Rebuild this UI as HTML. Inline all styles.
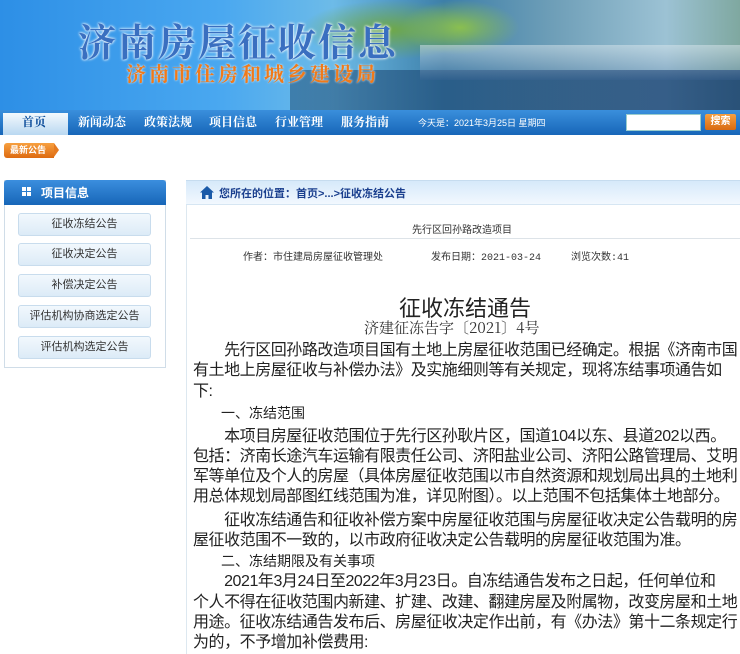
<!DOCTYPE html>
<html><head><meta charset="utf-8"><style>
*{margin:0;padding:0;box-sizing:border-box}
body{width:740px;height:654px;overflow:hidden;background:#fff;font-family:"Liberation Sans","Noto Sans CJK SC",sans-serif;position:relative}
.a{position:absolute;white-space:nowrap}
#ban{left:0;top:0;width:740px;height:110px;background:linear-gradient(90deg,#2d8fe6 0%,#4aa8f0 30%,#6dbbe8 45%,#3d7fa8 60%,#6f9fb8 75%,#9cc2d4 90%,#7fa8a0 100%);overflow:hidden}
#nav{left:0;top:110px;width:740px;height:25px;background:linear-gradient(#3a8fdc,#1766b8)}
.n{position:absolute;top:113px;font-size:12px;font-weight:bold;color:#fff;font-family:"Noto Serif CJK SC",serif}
.lb{position:absolute;left:18px;width:133px;height:23px;border:1px solid #c8dced;border-radius:3px;background:linear-gradient(#f2f8fd,#dcebf7);font-size:11px;color:#333;text-align:center;line-height:21px}
.t{position:absolute;left:193px;font-size:16px;letter-spacing:-0.45px;color:#222;white-space:nowrap;line-height:20px}
</style></head><body>
<div id="ban" class="a">
 <div class="a" style="left:300px;top:0;width:180px;height:60px;background:radial-gradient(ellipse at center,#6fa848 0%,rgba(80,140,60,0) 70%)"></div>
 <div class="a" style="left:400px;top:0;width:120px;height:55px;background:radial-gradient(ellipse at center,#8abf50 0%,rgba(80,140,60,0) 70%)"></div>
 <div class="a" style="left:290px;top:70px;width:450px;height:40px;background:linear-gradient(90deg,rgba(40,90,130,.6),rgba(20,60,110,.8))"></div>
 <div class="a" style="left:420px;top:45px;width:320px;height:35px;background:linear-gradient(rgba(220,232,238,.5),rgba(60,100,150,.3))"></div>
 <div class="a" style="left:78px;top:12px;font-size:38px;font-weight:bold;color:#3a6fc0;font-family:'Noto Serif CJK SC',serif;letter-spacing:2px;text-shadow:0 0 3px #fff,0 0 2px #fff">济南房屋征收信息</div>
 <div class="a" style="left:126px;top:58px;font-size:20px;font-weight:bold;color:#f07a1a;font-family:'Noto Serif CJK SC',serif;letter-spacing:3px;text-shadow:0 0 2px #fff">济南市住房和城乡建设局</div>
</div>
<div id="nav" class="a"></div>
<div class="a" style="left:3px;top:113px;width:65px;height:22px;background:linear-gradient(#f4f9fd,#b9d8f1)"></div>
<div class="n" style="left:22px;color:#0d4d9a">首页</div>
<div class="n" style="left:78px">新闻动态</div>
<div class="n" style="left:144px">政策法规</div>
<div class="n" style="left:209px">项目信息</div>
<div class="n" style="left:275px">行业管理</div>
<div class="n" style="left:341px">服务指南</div>
<div class="a" style="left:418px;top:116px;font-size:9px;color:#fff">今天是：2021年3月25日 星期四</div>
<div class="a" style="left:626px;top:114px;width:75px;height:17px;background:#fff;border:1px solid #9cc"></div>
<div class="a" style="left:705px;top:114px;width:31px;height:16px;background:linear-gradient(#f6a040,#d86a10);border-radius:2px;color:#fff;font-size:10px;font-weight:bold;text-align:center;line-height:16px">搜索</div>
<div class="a" style="left:4px;top:143px;width:50px;height:15px;background:linear-gradient(#f7a040,#dd6a10);border-radius:3px 0 0 3px;color:#fff;font-size:9px;font-weight:bold;line-height:15px;padding-left:6px">最新公告</div>
<div class="a" style="left:54px;top:143px;width:0;height:0;border-top:7.5px solid transparent;border-bottom:7.5px solid transparent;border-left:5px solid #e57a20"></div>
<div class="a" style="left:4px;top:180px;width:162px;height:188px;border:1px solid #d0dde8"></div>
<div class="a" style="left:4px;top:180px;width:162px;height:25px;background:linear-gradient(#3b8ede,#1766b8);border-radius:3px 3px 0 0"></div>
<div class="a" style="left:22px;top:187px;width:4px;height:4px;background:#fff;box-shadow:5px 0 #fff,0 5px #fff,5px 5px #fff"></div>
<div class="a" style="left:41px;top:184px;font-size:12px;font-weight:bold;color:#fff">项目信息</div>
<div class="lb" style="top:213px">征收冻结公告</div>
<div class="lb" style="top:243px">征收决定公告</div>
<div class="lb" style="top:274px">补偿决定公告</div>
<div class="lb" style="top:305px">评估机构协商选定公告</div>
<div class="lb" style="top:336px">评估机构选定公告</div>
<div class="a" style="left:186px;top:180px;width:554px;height:25px;background:linear-gradient(#d6e9fa,#f2f8fe);border-top:1px solid #c6dcef;border-bottom:1px solid #d6e6f3"></div>
<div class="a" style="left:186px;top:205px;width:1px;height:449px;background:#dde8f0"></div>
<svg class="a" style="left:200px;top:186px" width="14" height="13" viewBox="0 0 14 13"><path d="M7 0L0 6.5h2V13h3.5V9h3v4H12V6.5h2z" fill="#1a5aa8"/></svg>
<div class="a" style="left:219px;top:185px;font-size:11px;font-weight:bold;color:#1a3f8e">您所在的位置：首页&gt;...&gt;征收冻结公告</div>
<div class="a" style="left:412px;top:221px;font-size:10px;color:#333">先行区回孙路改造项目</div>
<div class="a" style="left:190px;top:238px;width:550px;height:1px;background:#dde3e8"></div>
<div class="a" style="left:243px;top:248px;font-size:10px;color:#333">作者：市住建局房屋征收管理处</div>
<div class="a" style="left:431px;top:248px;font-size:10px;color:#333;font-family:'Liberation Mono','Noto Sans CJK SC',monospace">发布日期：2021-03-24</div>
<div class="a" style="left:571px;top:248px;font-size:10px;color:#333;font-family:'Liberation Mono','Noto Sans CJK SC',monospace">浏览次数:41</div>
<div class="a" style="left:399px;top:291px;font-size:22px;color:#222">征收冻结通告</div>
<div class="a" style="left:364px;top:317px;font-size:15px;color:#333;font-family:'Noto Serif CJK SC',serif">济建征冻告字〔2021〕4号</div>
<div class="t" style="top:341px">　　先行区回孙路改造项目国有土地上房屋征收范围已经确定。根据《济南市国</div>
<div class="t" style="top:361px">有土地上房屋征收与补偿办法》及实施细则等有关规定，现将冻结事项通告如</div>
<div class="t" style="top:382px">下:</div>
<div class="t" style="top:403px;font-size:14px;letter-spacing:0">　　一、冻结范围</div>
<div class="t" style="top:427px">　　本项目房屋征收范围位于先行区孙耿片区，国道104以东、县道202以西。</div>
<div class="t" style="top:447px">包括：济南长途汽车运输有限责任公司、济阳盐业公司、济阳公路管理局、艾明</div>
<div class="t" style="top:467px">军等单位及个人的房屋（具体房屋征收范围以市自然资源和规划局出具的土地利</div>
<div class="t" style="top:487px">用总体规划局部图红线范围为准，详见附图）。以上范围不包括集体土地部分。</div>
<div class="t" style="top:511px">　　征收冻结通告和征收补偿方案中房屋征收范围与房屋征收决定公告载明的房</div>
<div class="t" style="top:531px">屋征收范围不一致的，以市政府征收决定公告载明的房屋征收范围为准。</div>
<div class="t" style="top:551px;font-size:14px;letter-spacing:0">　　二、冻结期限及有关事项</div>
<div class="t" style="top:572px">　　2021年3月24日至2022年3月23日。自冻结通告发布之日起，任何单位和</div>
<div class="t" style="top:593px">个人不得在征收范围内新建、扩建、改建、翻建房屋及附属物，改变房屋和土地</div>
<div class="t" style="top:613px">用途。征收冻结通告发布后、房屋征收决定作出前，有《办法》第十二条规定行</div>
<div class="t" style="top:633px">为的，不予增加补偿费用:</div>
</body></html>
